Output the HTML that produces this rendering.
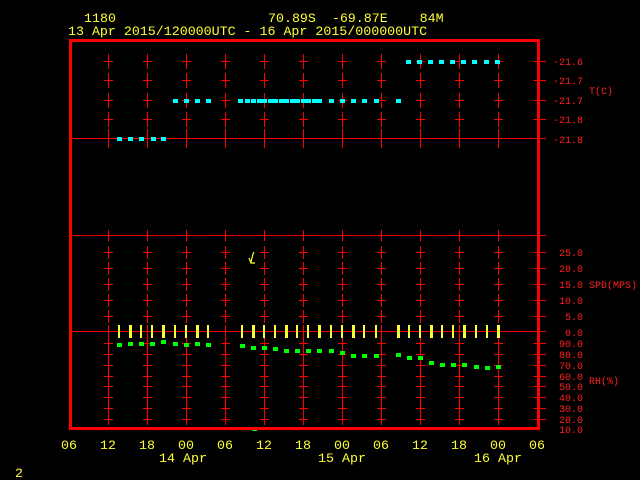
<!DOCTYPE html>
<html><head><meta charset="utf-8"><style>
html,body{margin:0;padding:0;background:#000;width:640px;height:480px;overflow:hidden}
svg{display:block}
text{font-family:"Liberation Mono",monospace;white-space:pre}
.h{font-size:13.3px}
.y{fill:#ffff33}.r{fill:#ff2020;font-size:10px}
</style></head><body>
<svg id="s" width="640" height="480" xmlns="http://www.w3.org/2000/svg" xml:space="preserve">
<g id="g"></g>
<rect x="70.5" y="40.5" width="468" height="388" fill="none" stroke="#ff0000" stroke-width="3"/>
<text class="y h" x="84" y="22">1180</text>
<text class="y h" x="268" y="22">70.89S  -69.87E    84M</text>
<text class="y h" x="68" y="35">13 Apr 2015/120000UTC - 16 Apr 2015/000000UTC</text>
<g>
<text class="r" x="553" y="65">-21.6</text><text class="r" x="553" y="84">-21.7</text><text class="r" x="553" y="104">-21.7</text><text class="r" x="553" y="123">-21.8</text><text class="r" x="553" y="143">-21.8</text>
<text class="r" x="589" y="94">T(C)</text>
<text class="r" x="559" y="256">25.0</text><text class="r" x="559" y="272">20.0</text><text class="r" x="559" y="288">15.0</text><text class="r" x="559" y="304">10.0</text><text class="r" x="565" y="320">5.0</text><text class="r" x="565" y="336">0.0</text>
<text class="r" x="589" y="288">SPD(MPS)</text>
<text class="r" x="559" y="347">90.0</text><text class="r" x="559" y="358">80.0</text><text class="r" x="559" y="369">70.0</text><text class="r" x="559" y="380">60.0</text><text class="r" x="559" y="390">50.0</text><text class="r" x="559" y="401">40.0</text><text class="r" x="559" y="412">30.0</text><text class="r" x="559" y="423">20.0</text><text class="r" x="559" y="433">10.0</text>
<text class="r" x="589" y="384">RH(%)</text>
</g>
<g class="y h" text-anchor="middle">
<text class="y h" x="69" y="449">06</text><text class="y h" x="108" y="449">12</text><text class="y h" x="147" y="449">18</text><text class="y h" x="186" y="449">00</text><text class="y h" x="225" y="449">06</text><text class="y h" x="264" y="449">12</text><text class="y h" x="303" y="449">18</text><text class="y h" x="342" y="449">00</text><text class="y h" x="381" y="449">06</text><text class="y h" x="420" y="449">12</text><text class="y h" x="459" y="449">18</text><text class="y h" x="498" y="449">00</text><text class="y h" x="537" y="449">06</text>
<text class="y h" x="183" y="462">14 Apr</text><text class="y h" x="342" y="462">15 Apr</text><text class="y h" x="498" y="462">16 Apr</text>
</g>
<text class="y h" x="15" y="477">2</text>
<path d="M253 254 L251 262 M249 258 L251 263 L255 263 M253 254 L254 252" stroke="#ffff33" stroke-width="1.2" fill="none"/>
</svg>
<script>
var g=document.getElementById('g'),h='';
function L(x1,y1,x2,y2,c,w){h+='<line x1="'+x1+'" y1="'+y1+'" x2="'+x2+'" y2="'+y2+'" stroke="'+c+'" stroke-width="'+(w||1)+'"/>';}
function R(x,y,w,hh,c){h+='<rect x="'+x+'" y="'+y+'" width="'+w+'" height="'+hh+'" fill="'+c+'"/>';}
L(72,138.5,538,138.5,'#f00');L(72,235.5,538,235.5,'#d00');L(72,331.5,538,331.5,'#f00');
var ticks=[[61,7],[80,7],[100,7],[119,7],[138,9],[235,5],[252,6],[268,6],[284,6],[300,6],[316,6],[331,6],[343,5],[354,5],[365,5],[376,5],[386,5],[397,5],[408,5],[419,5]];
var xs=[108,147,186,225,264,303,342,381,420,459,498];
xs.forEach(function(x){ticks.forEach(function(t){L(x+.5,t[0]-t[1],x+.5,t[0]+t[1]+1,'#f00');L(x-4,t[0]+.5,x+5,t[0]+.5,'#f00');});});
ticks.forEach(function(t){L(533,t[0]+.5,546,t[0]+.5,'#f00');});
[119,130,141,153,163].forEach(function(x){R(x-2,137,5,4,'#00ffff');});
[175,186,197,208,240,247,253,259,264,270,275,281,286,292,297,303,308,314,319,331,342,353,364,376,398].forEach(function(x){R(x-2,99,5,4,'#00ffff');});
[408,419,430,441,452,463,474,486,497].forEach(function(x){R(x-2,60,5,4,'#00ffff');});
[119,130,141,152,163,175,186,197,208,242,253,264,275,286,297,308,319,331,342,353,364,376,398,409,420,431,442,453,464,476,487,498].forEach(function(x,i){var w=(i%3==1)?3:2;R(x-1,325,w,13,'#ffff33');});
[[119,345],[130,344],[141,344],[152,344],[163,342],[175,344],[186,345],[197,344],[208,345],[242,346],[253,348],[264,348],[275,349],[286,351],[297,351],[308,351],[319,351],[331,351],[342,353],[353,356],[364,356],[376,356],[398,355],[409,358],[420,358],[431,363],[442,365],[453,365],[464,365],[476,367],[487,368],[498,367],[254,429]].forEach(function(p){R(p[0]-2,p[1]-2,5,4,'#00ff00');});
g.innerHTML=h;
</script>
</body></html>
